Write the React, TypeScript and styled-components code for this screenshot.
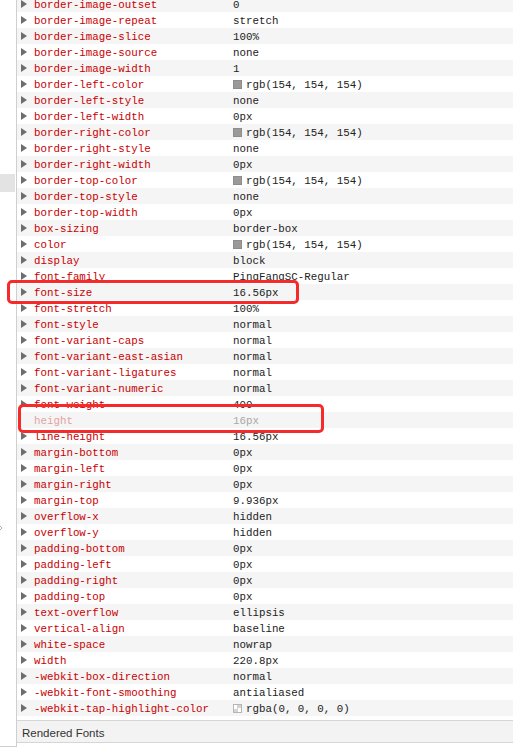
import React from "react";
import styled, { createGlobalStyle } from "styled-components";

const GlobalStyle = createGlobalStyle`
  html, body { margin: 0; padding: 0; background: #ffffff; }
  body { overflow: hidden; }
`;

type Row = { name: string; value: string; swatch?: "solid" | "checker"; inactive?: boolean };

const rows: Row[] = [
  { name: "border-image-outset", value: "0" },
  { name: "border-image-repeat", value: "stretch" },
  { name: "border-image-slice", value: "100%" },
  { name: "border-image-source", value: "none" },
  { name: "border-image-width", value: "1" },
  { name: "border-left-color", value: "rgb(154, 154, 154)", swatch: "solid" },
  { name: "border-left-style", value: "none" },
  { name: "border-left-width", value: "0px" },
  { name: "border-right-color", value: "rgb(154, 154, 154)", swatch: "solid" },
  { name: "border-right-style", value: "none" },
  { name: "border-right-width", value: "0px" },
  { name: "border-top-color", value: "rgb(154, 154, 154)", swatch: "solid" },
  { name: "border-top-style", value: "none" },
  { name: "border-top-width", value: "0px" },
  { name: "box-sizing", value: "border-box" },
  { name: "color", value: "rgb(154, 154, 154)", swatch: "solid" },
  { name: "display", value: "block" },
  { name: "font-family", value: "PingFangSC-Regular" },
  { name: "font-size", value: "16.56px" },
  { name: "font-stretch", value: "100%" },
  { name: "font-style", value: "normal" },
  { name: "font-variant-caps", value: "normal" },
  { name: "font-variant-east-asian", value: "normal" },
  { name: "font-variant-ligatures", value: "normal" },
  { name: "font-variant-numeric", value: "normal" },
  { name: "font-weight", value: "400" },
  { name: "height", value: "16px", inactive: true },
  { name: "line-height", value: "16.56px" },
  { name: "margin-bottom", value: "0px" },
  { name: "margin-left", value: "0px" },
  { name: "margin-right", value: "0px" },
  { name: "margin-top", value: "9.936px" },
  { name: "overflow-x", value: "hidden" },
  { name: "overflow-y", value: "hidden" },
  { name: "padding-bottom", value: "0px" },
  { name: "padding-left", value: "0px" },
  { name: "padding-right", value: "0px" },
  { name: "padding-top", value: "0px" },
  { name: "text-overflow", value: "ellipsis" },
  { name: "vertical-align", value: "baseline" },
  { name: "white-space", value: "nowrap" },
  { name: "width", value: "220.8px" },
  { name: "-webkit-box-direction", value: "normal" },
  { name: "-webkit-font-smoothing", value: "antialiased" },
  { name: "-webkit-tap-highlight-color", value: "rgba(0, 0, 0, 0)", swatch: "checker" },
];

const Page = styled.div`
  position: relative;
  display: flex;
  width: 513px;
  height: 749px;
  overflow: hidden;
  background: #ffffff;
`;

const Gutter = styled.div`
  flex: 0 0 16px;
  height: 746px;
  display: flex;
  flex-direction: column;
  border-right: 1px solid #cfcfcf;
  border-bottom: 1px solid #cfcfcf;
  box-sizing: content-box;
`;

const GutterBlock = styled.div`
  margin-top: 174px;
  width: 15px;
  height: 18px;
  background: #e3e3e3;
`;

const GutterChevron = styled.svg`
  margin-top: 332px;
  margin-left: -2px;
  display: block;
`;

const Main = styled.div`
  flex: 1;
  min-width: 0;
  display: flex;
  flex-direction: column;
`;

const List = styled.div`
  margin-top: -4px;
  display: flex;
  flex-direction: column;
`;

const PropRow = styled.div<{ $alt: boolean }>`
  display: grid;
  grid-template-columns: 4px 13px 199px 1fr;
  align-items: center;
  box-sizing: border-box;
  height: 16px;
  padding-top: 2px;
  background: ${(p) => (p.$alt ? "#f5f5f5" : "#ffffff")};
  font-family: "Liberation Mono", "DejaVu Sans Mono", monospace;
  font-size: 10.8px;
  line-height: 14px;
  white-space: nowrap;
`;

const Triangle = styled.span<{ $hidden?: boolean }>`
  grid-column: 2;
  width: 0;
  height: 0;
  margin-top: -2px;
  border-left: 6px solid #6e6e6e;
  border-top: 4px solid transparent;
  border-bottom: 4px solid transparent;
  visibility: ${(p) => (p.$hidden ? "hidden" : "visible")};
`;

const PropName = styled.span<{ $inactive?: boolean }>`
  grid-column: 3;
  color: ${(p) => (p.$inactive ? "#e2a3a3" : "#c80000")};
`;

const PropValue = styled.span<{ $inactive?: boolean }>`
  grid-column: 4;
  display: flex;
  align-items: center;
  gap: 4px;
  color: ${(p) => (p.$inactive ? "#a8a8a8" : "#222222")};
`;

const Swatch = styled.span<{ $kind: "solid" | "checker" }>`
  width: 9px;
  height: 9px;
  box-sizing: border-box;
  border: 1px solid ${(p) => (p.$kind === "solid" ? "#8d8d8d" : "#b5b5b5")};
  background: ${(p) =>
    p.$kind === "solid"
      ? "#9a9a9a"
      : "conic-gradient(#d4d4d4 0 25%, #ffffff 0 50%, #d4d4d4 0 75%, #ffffff 0) 0 0 / 7px 7px"};
  margin-top: -2px;
`;

const Spacer = styled.div`
  height: 4px;
`;

const SectionBar = styled.div`
  height: 23px;
  display: flex;
  align-items: center;
  padding-left: 5px;
  padding-top: 2px;
  box-sizing: border-box;
  background: #f3f3f3;
  border-top: 1px solid #d6d6d6;
  border-bottom: 1px solid #d6d6d6;
  font-family: "Liberation Sans", Arial, sans-serif;
  font-size: 11.5px;
  color: #333333;
`;

const Highlight = styled.div<{ $l: number; $t: number; $w: number; $h: number }>`
  position: absolute;
  left: ${(p) => p.$l}px;
  top: ${(p) => p.$t}px;
  width: ${(p) => p.$w}px;
  height: ${(p) => p.$h}px;
  box-sizing: border-box;
  border: 3px solid #f52a2a;
  border-radius: 5px;
  pointer-events: none;
`;

export default function App() {
  return (
    <>
      <GlobalStyle />
      <Page>
        <Gutter>
          <GutterBlock />
          <GutterChevron width="6" height="8" viewBox="0 0 6 8">
            <path d="M1 1 L4 4 L1 7" fill="none" stroke="#a9b8c8" strokeWidth="1" />
          </GutterChevron>
        </Gutter>
        <Main>
          <List>
            {rows.map((r, i) => (
              <PropRow key={r.name + i} $alt={i % 2 === 0}>
                <Triangle $hidden={r.inactive} />
                <PropName $inactive={r.inactive}>{r.name}</PropName>
                <PropValue $inactive={r.inactive}>
                  {r.swatch && <Swatch $kind={r.swatch} />}
                  <span>{r.value}</span>
                </PropValue>
              </PropRow>
            ))}
          </List>
          <Spacer />
          <SectionBar>Rendered Fonts</SectionBar>
        </Main>
        <Highlight $l={7} $t={280} $w={292} $h={24} />
        <Highlight $l={18} $t={404} $w={306} $h={29} />
      </Page>
    </>
  );
}
